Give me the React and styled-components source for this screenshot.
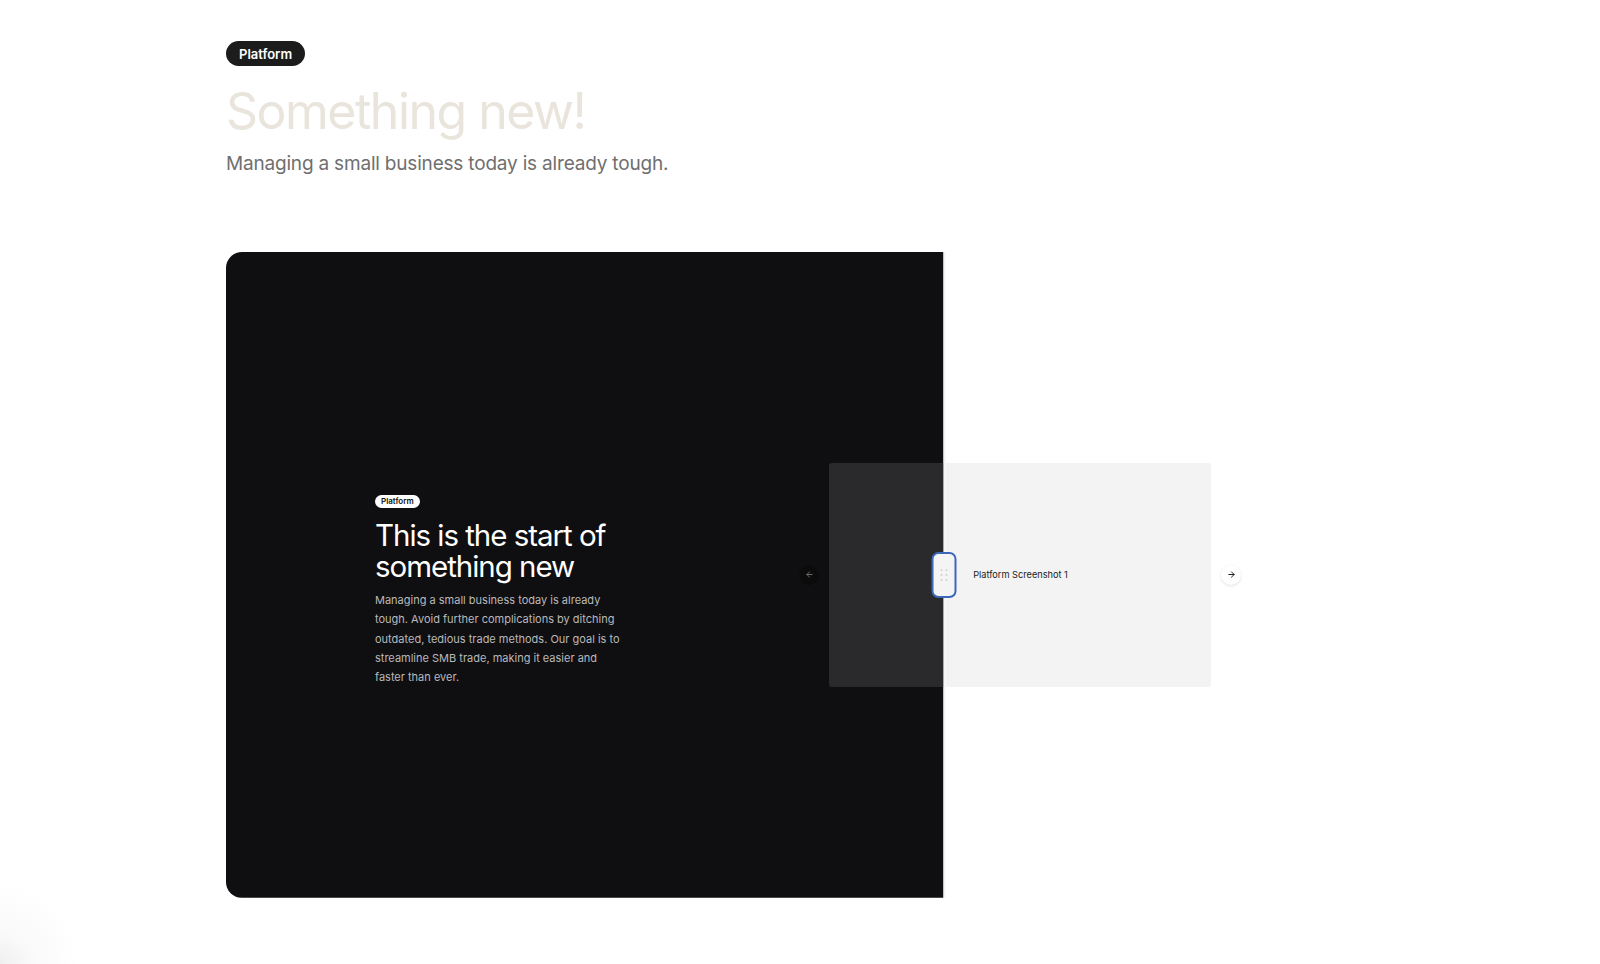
import React from "react";
import styled, { createGlobalStyle } from "styled-components";

const Global = createGlobalStyle`
  html, body { margin: 0; padding: 0; }
  body {
    background: radial-gradient(circle at 0 100%, #efefef 0, rgba(244,244,244,0.5) 30px, rgba(255,255,255,0) 80px), #ffffff;
    min-height: 964px;
    font-family: Inter, "Noto Sans", sans-serif;
    -webkit-font-smoothing: antialiased;
  }
`;

const Page = styled.main`
  width: 1148px;
  margin: 0 auto;
  padding-top: 41px;
  padding-bottom: 66px;
`;

const Tag = styled.span`
  display: inline-flex;
  align-items: center;
  height: ${(p) => (p.$small ? "13px" : "25px")};
  padding: 0 ${(p) => (p.$small ? "6px" : "13px")};
  border-radius: 999px;
  background: ${(p) => (p.$light ? "#ffffff" : "#1c1c1c")};
  color: ${(p) => (p.$light ? "#111111" : "#ffffff")};
  font-size: ${(p) => (p.$small ? "8px" : "13px")};
  font-weight: 600;
  box-sizing: border-box;
`;

const Title = styled.h1`
  margin: 20px 0 0;
  font-size: 50px;
  line-height: 50px;
  font-weight: 400;
  letter-spacing: -0.03em;
  color: #e9e4dc;
`;

const Subtitle = styled.p`
  margin: 15px 0 0;
  font-size: 19px;
  line-height: 25px;
  font-weight: 400;
  letter-spacing: -0.01em;
  color: #6f6f6f;
`;

const Compare = styled.section`
  position: relative;
  margin-top: 76px;
  width: 1148px;
  aspect-ratio: 16 / 9;
  border-radius: 16px;
  overflow: hidden;
  background: #ffffff;
`;

const Layer = styled.div`
  position: absolute;
  inset: 0;
  background: ${(p) => (p.$dark ? "#0f0f11" : "#ffffff")};
  clip-path: ${(p) => (p.$clip ? `inset(0 ${100 - p.$clip}% 0 0)` : "none")};
`;

const Stage = styled.div`
  height: 100%;
  display: flex;
  align-items: center;
  justify-content: space-between;
  padding: 0 133px 0 149px;
  box-sizing: border-box;
`;

const TextCol = styled.div`
  width: 246px;
  padding-top: 33px;
  display: flex;
  flex-direction: column;
  align-items: flex-start;
  visibility: ${(p) => (p.$hidden ? "hidden" : "visible")};
`;

const Headline = styled.h2`
  margin: 12px 0 0;
  font-size: 29.5px;
  line-height: 31px;
  font-weight: 400;
  letter-spacing: -0.035em;
  color: #ffffff;
`;

const Body = styled.p`
  margin: 9px 0 0;
  font-size: 11px;
  line-height: 19.4px;
  font-weight: 400;
  color: #b9b9bb;
`;

const Carousel = styled.div`
  display: flex;
  align-items: center;
  gap: 10px;
`;

const ArrowBtn = styled.button`
  width: 20px;
  height: 20px;
  padding: 0;
  border: none;
  border-radius: 50%;
  display: flex;
  align-items: center;
  justify-content: center;
  background: ${(p) => (p.$dark ? "#0b0b0c" : "#ffffff")};
  color: ${(p) => (p.$dark ? "#6e6e70" : "#1a1a1a")};
  box-shadow: ${(p) => (p.$dark ? "none" : "0 1px 3px rgba(0,0,0,0.12)")};
`;

const Card = styled.div`
  width: 382px;
  height: 224px;
  border-radius: 3px;
  background: ${(p) => (p.$dark ? "#2a2a2c" : "#f3f3f3")};
  display: flex;
  align-items: center;
  justify-content: center;
`;

const CardLabel = styled.span`
  font-size: 9.2px;
  color: ${(p) => (p.$dark ? "#2a2a2c" : "#222222")};
  padding-left: 1px;
`;

const Divider = styled.div`
  position: absolute;
  top: 0;
  bottom: 0;
  left: calc(${(p) => p.$pos}% - 1px);
  width: 3px;
  background: linear-gradient(90deg, rgba(255,255,255,0.3), #f4f4f4 50%, #fbfbfb);
`;

const Handle = styled.div`
  position: absolute;
  top: 50%;
  left: ${(p) => p.$pos}%;
  transform: translate(-50%, -50%);
  width: 25px;
  height: 46px;
  box-sizing: border-box;
  border: 2px solid #3c68bb;
  border-radius: 7px;
  background: #f4f4f4;
  display: grid;
  grid-template-columns: repeat(2, 2px);
  grid-template-rows: repeat(3, 2px);
  gap: 3px 3px;
  align-content: center;
  justify-content: center;
`;

const Dot = styled.span`
  width: 2px;
  height: 2px;
  border-radius: 50%;
  background: #d2d2d2;
`;

const Arrow = ({ dir }) => (
  <svg width="9" height="9" viewBox="0 0 24 24" fill="none" stroke="currentColor" strokeWidth="2.6" strokeLinecap="round" strokeLinejoin="round">
    {dir === "left" ? (
      <>
        <path d="M19 12H5" />
        <path d="M12 19l-7-7 7-7" />
      </>
    ) : (
      <>
        <path d="M5 12h14" />
        <path d="M12 5l7 7-7 7" />
      </>
    )}
  </svg>
);

const Scene = ({ dark }) => (
  <Stage>
    <TextCol $hidden={!dark}>
      <Tag $small $light>Platform</Tag>
      <Headline>This is the start of something new</Headline>
      <Body>
        Managing a small business today is already tough. Avoid further complications by ditching
        outdated, tedious trade methods. Our goal is to streamline SMB trade, making it easier and
        faster than ever.
      </Body>
    </TextCol>
    <Carousel>
      <ArrowBtn $dark={dark} aria-label="Previous">
        <Arrow dir="left" />
      </ArrowBtn>
      <Card $dark={dark}>
        <CardLabel $dark={dark}>Platform Screenshot 1</CardLabel>
      </Card>
      <ArrowBtn $dark={dark} aria-label="Next">
        <Arrow dir="right" />
      </ArrowBtn>
    </Carousel>
  </Stage>
);

export default function App() {
  const pos = 62.5;
  return (
    <>
      <Global />
      <Page>
        <Tag>Platform</Tag>
        <Title>Something new!</Title>
        <Subtitle>Managing a small business today is already tough.</Subtitle>
        <Compare>
          <Layer>
            <Scene dark={false} />
          </Layer>
          <Layer $dark $clip={pos}>
            <Scene dark />
          </Layer>
          <Divider $pos={pos} />
          <Handle $pos={pos}>
            {Array.from({ length: 6 }).map((_, i) => (
              <Dot key={i} />
            ))}
          </Handle>
        </Compare>
      </Page>
    </>
  );
}
